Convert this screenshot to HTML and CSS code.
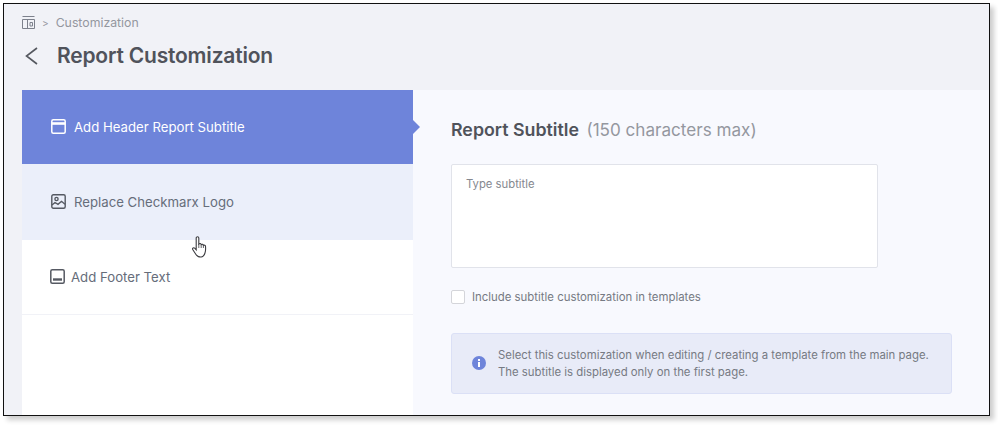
FILE: index.html
```html
<!DOCTYPE html>
<html>
<head>
  <title>Report Customization</title>
  <link rel="stylesheet" href="styles.css">
</head>
<body>
  <div class="frame">
    <header class="top">
      <div class="crumbs">
        <svg class="crumb-icon" width="13" height="13" viewBox="0 0 13 13" fill="none" stroke="#7d818c" stroke-width="1">
          <path d="M.5 .5h12M.5 3.500h12v9H.5zM5.500 3.500v9M8 6.500h2.500v3.500H8z"/>
        </svg>
        <span class="crumb-sep">&gt;</span>
        <span>Customization</span>
      </div>
      <div class="title-row">
        <svg width="15" height="20" viewBox="0 0 15 20" fill="none" stroke="#55585f" stroke-width="1.6">
          <path d="M13 2L2.500 10 13 18"/>
        </svg>
        <h1>Report Customization</h1>
      </div>
    </header>
    <div class="main">
      <nav class="side">
        <div class="side-item active">
          <svg width="15" height="15" viewBox="0 0 15 15" fill="none" stroke="#fff" stroke-width="1.500">
            <rect x=".8" y=".8" width="13.4" height="13.4" rx="1.500"/>
            <path d="M1 4.500h13" stroke-width="2.600"/>
          </svg>
          <span>Add Header Report Subtitle</span>
        </div>
        <div class="side-item hover">
          <svg width="15" height="15" viewBox="0 0 15 15" fill="none" stroke="#555962" stroke-width="1.400">
            <rect x=".8" y=".8" width="13.4" height="13.4" rx="1.500"/>
            <circle cx="5.500" cy="5" r="1.600"/>
            <path d="M1 11l3-2.500 3 1.800 3.500-3 3.500 3"/>
          </svg>
          <span>Replace Checkmarx Logo</span>
        </div>
        <div class="side-item footer-item">
          <svg width="15" height="15" viewBox="0 0 15 15" fill="none" stroke="#555962" stroke-width="1.500">
            <rect x=".8" y=".8" width="13.4" height="13.4" rx="1.500"/>
            <path d="M3 10.500h9" stroke-width="2.400"/>
          </svg>
          <span>Add Footer Text</span>
        </div>
      </nav>
      <section class="panel">
        <h2>Report Subtitle <span class="limit">(150 characters max)</span></h2>
        <div class="textbox">Type subtitle</div>
        <label class="check">
          <span class="box"></span>
          <span>Include subtitle customization in templates</span>
        </label>
        <div class="note">
          <svg width="14" height="14" viewBox="0 0 14 14">
            <circle cx="7" cy="7" r="7" fill="#6e84da"/>
            <rect x="6" y="6" width="2" height="5" fill="#fff"/>
            <rect x="6" y="3" width="2" height="2" fill="#fff"/>
          </svg>
          <p>Select this customization when editing / creating a template from the main page.<br>The subtitle is displayed only on the first page.</p>
        </div>
      </section>
    </div>
    <svg class="cursor" width="15" height="22" viewBox="0 0 15 22" fill="#fff" stroke="#3c3c40" stroke-width="1.100">
      <path d="M4.200 2c0-1.700 2.600-1.700 2.600 0v6c1-.9 2.200-.6 2.400.6.900-.6 2-.3 2.200.7.900-.5 2-.1 2.100 1 .2 2.400.3 4.800-.6 7-.6 1.700-1.700 3.600-3.700 3.700-2.500.2-4.300-.8-5.400-2.800L.7 13.500c-.6-1.400 1-2.300 2-1.300l1.500 1.700z"/>
      <path d="M6.800 8v4M9.200 8.600V12M11.400 9.300V12" fill="none" stroke-width=".8"/>
    </svg>
  </div>
</body>
</html>
```

FILE: styles.css
```css
html, body {
  margin: 0;
  height: 100%;
  background: #fff;
  overflow: hidden;
}

body {
  padding: 3px 0 0 3px;
  box-sizing: border-box;
  font-family: Inter, "Liberation Sans", sans-serif;
}

.frame {
  position: relative;
  width: 987px;
  height: 413px;
  box-sizing: border-box;
  border: 1.5px solid #111;
  box-shadow: 4px 4px 5px rgba(0, 0, 0, 0.2);
  background: #f1f2f7;
  display: flex;
  flex-direction: column;
  overflow: visible;
}

.top {
  height: 85.5px;
  padding: 11px 0 0 18px;
  box-sizing: border-box;
}

.crumbs {
  display: flex;
  align-items: center;
  height: 15px;
  gap: 7px;
  font-size: 12.3px;
  color: #94979f;
}

.crumb-sep {
  font-size: 10px;
}

.title-row {
  display: flex;
  align-items: center;
  gap: 18px;
  margin-top: 13px;
  padding-left: 2px;
}

h1 {
  margin: 0;
  font-size: 21px;
  font-weight: 600;
  letter-spacing: -0.2px;
  color: #50535b;
}

.main {
  flex: 1;
  display: flex;
  padding-left: 18px;
  min-height: 0;
}

.side {
  width: 391px;
  background: #fff;
}

.side-item {
  position: relative;
  height: 75px;
  box-sizing: border-box;
  display: flex;
  align-items: center;
  gap: 8px;
  padding-left: 29px;
  font-size: 13.2px;
  color: #666d7a;
}

.active {
  height: 74px;
  background: #6e84da;
  color: #fff;
}

.active::after {
  content: "";
  position: absolute;
  left: 100%;
  top: 30px;
  border-left: 7px solid #6e84da;
  border-top: 7px solid transparent;
  border-bottom: 7px solid transparent;
}

.hover {
  height: 76px;
  background: #ebeffa;
}

.footer-item {
  padding-left: 28px;
  gap: 6px;
  border-bottom: 1px solid #f1f2f7;
}

.panel {
  flex: 1;
  background: #f8f9fe;
  padding: 30px 37px 0 38px;
  min-width: 0;
}

h2 {
  margin: 0;
  font-size: 17.8px;
  line-height: 20px;
  font-weight: 600;
  color: #50535b;
}

.limit {
  margin-left: 3px;
  font-size: 17.1px;
  font-weight: 400;
  color: #94979f;
}

.textbox {
  width: 427px;
  height: 104px;
  box-sizing: border-box;
  margin-top: 24px;
  padding: 12px 14px;
  background: #fff;
  border: 1px solid #e1e3ea;
  border-radius: 2px;
  font-size: 11.3px;
  color: #85888f;
}

.check {
  display: flex;
  align-items: center;
  gap: 7px;
  margin-top: 22px;
  font-size: 11.4px;
  color: #767a83;
}

.box {
  width: 14px;
  height: 14px;
  box-sizing: border-box;
  background: #fff;
  border: 1px solid #d4d5da;
  border-radius: 2px;
}

.note {
  display: flex;
  align-items: center;
  gap: 12px;
  height: 61px;
  box-sizing: border-box;
  margin-top: 29px;
  padding-left: 20px;
  background: #e8ebf8;
  border: 1px solid #dbe0f6;
  border-radius: 3px;
}

.note p {
  margin: 0;
  padding-top: 2px;
  font-size: 11.37px;
  line-height: 17px;
  color: #767a83;
}

.cursor {
  position: absolute;
  left: 188px;
  top: 232px;
}
```
